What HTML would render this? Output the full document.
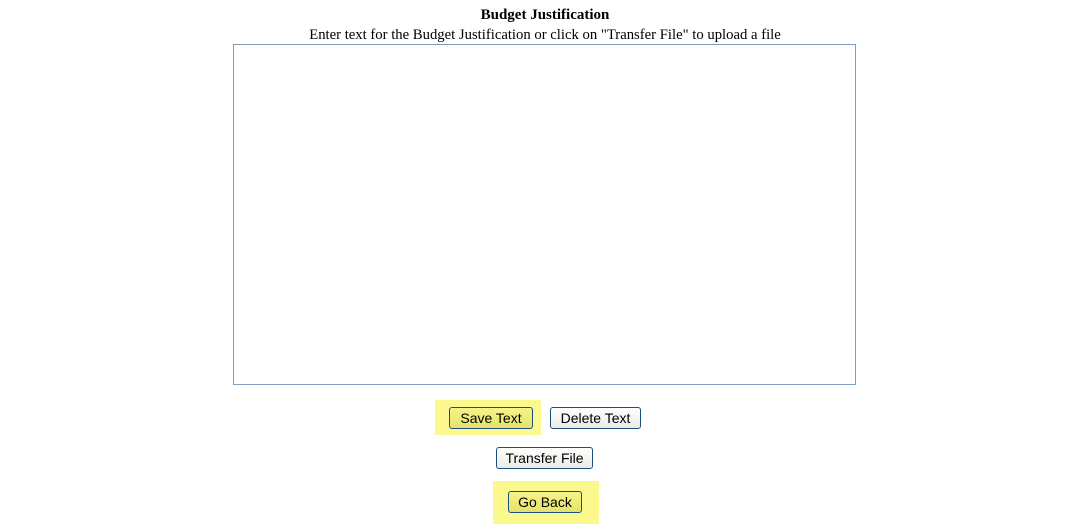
<!DOCTYPE html>
<html><head><style>
body{margin:0;background:#fff;width:1074px;height:524px;position:relative;font-family:"Liberation Serif",serif;overflow:hidden}
.t{position:absolute;left:0;width:1090px;text-align:center;color:#000}
.ta{position:absolute;left:233px;top:44px;width:621px;height:339px;border:1px solid #7f9db9;background:#fff}
.y{position:absolute;background:#fbf98e}
.b{position:absolute;box-sizing:border-box;border:1px solid #1c4f7f;border-radius:3px;font:14px "Liberation Sans",sans-serif;color:#000;text-align:center;line-height:20px;background:linear-gradient(#fefefe,#ecebe6)}
.b.g{background:linear-gradient(#f6f48a,#e6e26c)}
</style></head><body>
<div class="t" style="top:7px;font-size:15px;font-weight:bold">Budget Justification</div>
<div class="t" style="top:27px;font-size:14.7px">Enter text for the Budget Justification or click on "Transfer File" to upload a file</div>
<div class="ta"></div>
<div class="y" style="left:435px;top:400px;width:106px;height:35px"></div>
<div class="b g" style="left:449px;top:407px;width:84px;height:22px">Save Text</div>
<div class="b" style="left:550px;top:407px;width:91px;height:22px">Delete Text</div>
<div class="b" style="left:496px;top:447px;width:97px;height:22px">Transfer File</div>
<div class="y" style="left:493px;top:481px;width:106px;height:43px"></div>
<div class="b g" style="left:508px;top:491px;width:74px;height:22px">Go Back</div>
</body></html>
